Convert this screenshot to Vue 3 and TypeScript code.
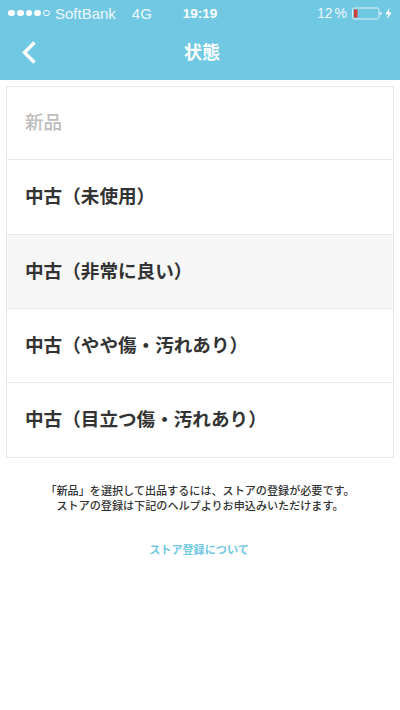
<script setup lang="ts">
interface Row { label: string; disabled?: boolean; active?: boolean }
const rows: Row[] = [
  { label: '新品', disabled: true },
  { label: '中古（未使用）' },
  { label: '中古（非常に良い）', active: true },
  { label: '中古（やや傷・汚れあり）' },
  { label: '中古（目立つ傷・汚れあり）' },
]
</script>

<template>
  <div class="page">
    <header class="header">
      <div class="status">
        <div class="status-left">
          <span class="signal">
            <i v-for="n in 4" :key="n" class="dot"></i>
            <i class="dot empty"></i>
          </span>
          <span class="carrier">SoftBank</span>
          <span class="net">4G</span>
        </div>
        <div class="time">19:19</div>
        <div class="status-right">
          <span class="pct">12 %</span>
          <svg class="battery" width="30" height="13" viewBox="0 0 30 13">
            <rect x="0.5" y="1" width="26.5" height="11" rx="1.5" fill="none" stroke="#e4eef2" stroke-width="1" />
            <rect x="2" y="2.5" width="3.5" height="8" fill="#d63b3b" />
            <rect x="28" y="5" width="1.5" height="3" fill="#e4eef2" />
          </svg>
          <svg class="bolt" width="7" height="11" viewBox="0 0 7 11">
            <path d="M4.4 0 L0.4 6.2 H3 L2.4 11 L6.6 4.5 H3.9 Z" fill="#fff" />
          </svg>
        </div>
      </div>
      <div class="nav">
        <svg class="back" width="16" height="25" viewBox="0 0 16 25">
          <path d="M13.5 2.5 L3.5 12.5 L13.5 22.5" fill="none" stroke="#fff" stroke-width="3.4" />
        </svg>
        <h1 class="title">状態</h1>
      </div>
    </header>

    <ul class="list">
      <li
        v-for="row in rows"
        :key="row.label"
        class="row"
        :class="{ disabled: row.disabled, active: row.active }"
      >
        {{ row.label }}
      </li>
    </ul>

    <p class="note">
      「新品」を選択して出品するには、ストアの登録が必要です。<br />
      ストアの登録は下記のヘルプよりお申込みいただけます。
    </p>
    <a class="link">ストア登録について</a>
  </div>
</template>

<style>
html, body { margin: 0; background: #fff; }
</style>

<style scoped>
.page {
  width: 400px;
  height: 710px;
  background: #fff;
  display: flex;
  flex-direction: column;
  font-family: "Noto Sans CJK JP", "Liberation Sans", sans-serif;
  overflow: hidden;
}
.header {
  height: 80px;
  background: #70c8e2;
  color: #fff;
  display: flex;
  flex-direction: column;
}
.status {
  height: 26px;
  display: grid;
  grid-template-columns: 1fr auto 1fr;
  align-items: center;
  padding: 0 8px;
  font-family: "Liberation Sans", sans-serif;
  font-size: 15px;
}
.status-left { display: flex; align-items: center; color: #eef8fb; }
.signal { display: flex; gap: 2px; margin-right: 5px; }
.dot { width: 6.8px; height: 6.8px; border-radius: 50%; background: #fff; box-sizing: border-box; }
.dot.empty { background: transparent; border: 1px solid #fff; }
.carrier { margin-right: 16px; }
.time { font-weight: 700; font-size: 13.5px; }
.status-right { display: flex; align-items: center; justify-content: flex-end; color: #eef8fb; }
.pct { margin-right: 5px; font-size: 14px; word-spacing: -2px; }
.bolt { margin-left: 3px; }
.nav {
  flex: 1;
  display: flex;
  align-items: center;
  justify-content: center;
  position: relative;
  padding: 0 0 4px 4px;
}
.back { position: absolute; left: 21px; top: 14px; }
.title {
  margin: 0;
  font-size: 18px;
  font-weight: 700;
  line-height: 1;
}
.list {
  list-style: none;
  margin: 6px 6px 0;
  padding: 0;
  border: 1px solid #e9e9e9;
}
.row {
  height: 74px;
  box-sizing: border-box;
  display: flex;
  align-items: center;
  padding: 0 0 3px 18px;
  font-size: 18.6px;
  line-height: 1;
  font-weight: 700;
  color: #333;
  border-top: 1px solid #e9e9e9;
}
.row:first-child { border-top: none; height: 72px; }
.row:nth-child(2) { height: 75px; }
.row:last-child { height: 75px; }
.row.disabled { color: #bdbdbd; font-weight: 500; }
.row.active { background: #f7f7f7; }
.note {
  margin: 25px 0 0;
  text-align: center;
  font-size: 11.1px;
  line-height: 15px;
  font-weight: 500;
  color: #333;
}
.link {
  margin-top: 29px;
  padding-right: 2px;
  text-align: center;
  font-size: 11.1px;
  line-height: 15px;
  font-weight: 700;
  color: #70c8e2;
}
</style>
